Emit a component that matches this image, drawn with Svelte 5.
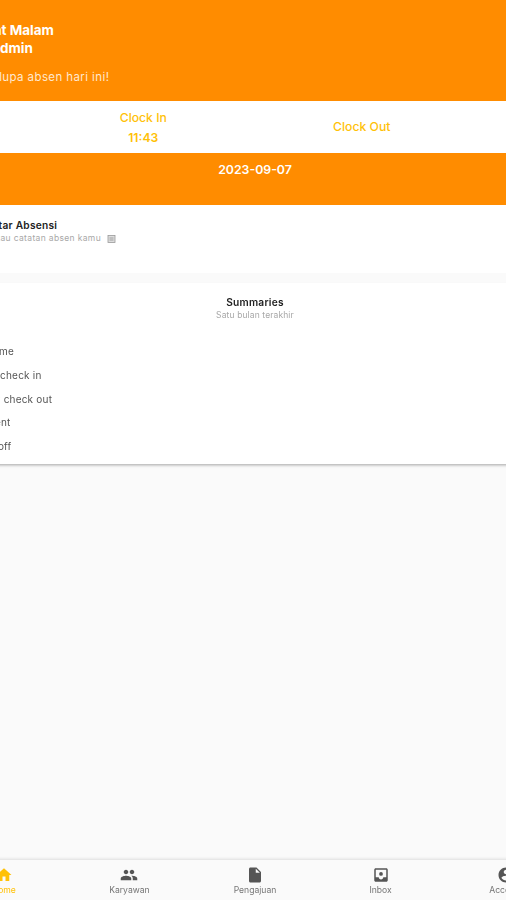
<script>
  const summaries = ['On time', 'Late check in', 'Early check out', 'Absent', 'Day off'];
  const tabs = [
    { label: 'Home', d: 'M10 20v-6h4v6h5v-8h3L12 3 2 12h3v8z', active: true },
    { label: 'Karyawan', d: 'M16 11c1.66 0 2.99-1.34 2.99-3S17.66 5 16 5s-3 1.34-3 3 1.34 3 3 3zm-8 0c1.66 0 2.99-1.34 2.99-3S9.66 5 8 5 5 6.34 5 8s1.34 3 3 3zm0 2c-2.33 0-7 1.17-7 3.5V19h14v-2.5C15 14.17 10.33 13 8 13zm8 0c-.29 0-.62.02-.97.05 1.16.84 1.97 1.97 1.97 3.45V19h6v-2.5c0-2.33-4.67-3.5-7-3.5z' },
    { label: 'Pengajuan', d: 'M6 2c-1.1 0-1.99.9-1.99 2L4 20c0 1.1.89 2 1.99 2H18c1.1 0 2-.9 2-2V8l-6-6H6zm7 7V3.5L18.5 9H13z' },
    { label: 'Inbox', d: 'M19 3H5c-1.1 0-2 .9-2 2v14c0 1.1.9 2 2 2h14c1.1 0 2-.9 2-2V5c0-1.1-.9-2-2-2zm0 12h-4c0 1.66-1.34 3-3 3s-3-1.34-3-3H5V5h14v10zM12 8a2.5 2.5 0 1 0 0 5 2.5 2.5 0 0 0 0-5z' },
    { label: 'Account', d: 'M12 2C6.48 2 2 6.48 2 12s4.48 10 10 10 10-4.48 10-10S17.52 2 12 2zm0 3c1.66 0 3 1.34 3 3s-1.34 3-3 3-3-1.34-3-3 1.34-3 3-3zm0 14.2c-2.5 0-4.71-1.28-6-3.22.03-1.99 4-3.08 6-3.08s5.97 1.09 6 3.08c-1.29 1.94-3.5 3.22-6 3.22z' }
  ];
</script>

<div class="page">
  <header class="hero">
    <div class="greeting">Selamat Malam</div>
    <div class="greeting">Halo, Admin</div>
    <p class="reminder">Jangan lupa absen hari ini!</p>
  </header>

  <section class="clock">
    <div class="clock-col">
      <span>Clock In</span>
      <span>11:43</span>
    </div>
    <div class="clock-col out">
      <span>Clock Out</span>
    </div>
  </section>

  <section class="date-band">2023-09-07</section>

  <section class="history">
    <h2>Daftar Absensi</h2>
    <p>
      Pantau catatan absen kamu
      <svg width="9" height="9" viewBox="0 0 9 9" aria-hidden="true">
        <rect x="1" y="1.5" width="7" height="7" fill="#ddd" stroke="#999" stroke-width="0.8" />
        <path d="M2.5 4h4M2.5 6h4" stroke="#888" stroke-width="0.7" />
      </svg>
    </p>
  </section>

  <section class="summary">
    <h2>Summaries</h2>
    <p>Satu bulan terakhir</p>
    <ul>
      {#each summaries as item}
        <li>{item}</li>
      {/each}
    </ul>
  </section>

  <div class="spacer"></div>

  <nav class="tabs">
    {#each tabs as tab}
      <div class="tab" class:active={tab.active}>
        <svg width="18" height="18" viewBox="0 0 24 24" aria-hidden="true"><path d={tab.d} fill-rule="evenodd" /></svg>
        <span>{tab.label}</span>
      </div>
    {/each}
  </nav>
</div>

<style>
  :global(body) {
    overflow: hidden;
    background: #fafafa;
  }
  .page {
    width: 628px;
    height: 900px;
    margin-left: -59px;
    display: flex;
    flex-direction: column;
    background: #fafafa;
    font-family: Inter, "Liberation Sans", sans-serif;
    filter: blur(0.6px);
  }
  .hero {
    height: 101px;
    box-sizing: border-box;
    padding: 21px 12px 0;
    background: #ff8c00;
    color: #fff;
  }
  .greeting {
    font-size: 13.5px;
    font-weight: 700;
    line-height: 18px;
  }
  .reminder {
    margin: 13px 0 0;
    font-size: 11.5px;
    letter-spacing: 0.4px;
    line-height: 14px;
    color: #ffe9cf;
  }
  .clock {
    height: 52px;
    padding-left: 93px;
    padding-right: 98px;
    display: grid;
    grid-template-columns: 1fr 1fr;
    background: #fff;
    color: #ffc107;
    font-size: 12.2px;
    font-weight: 500;
  }
  .clock-col {
    display: flex;
    flex-direction: column;
    align-items: center;
    justify-content: center;
    gap: 5px;
    line-height: 15px;
  }
  .clock-col.out {
    padding-bottom: 2px;
  }
  .clock-col span:nth-child(2) {
    font-weight: 600;
  }
  .date-band {
    height: 52px;
    box-sizing: border-box;
    padding-top: 9px;
    background: #ff8c00;
    color: #fff;
    text-align: center;
    font-size: 12.3px;
    font-weight: 600;
    line-height: 16px;
  }
  .history {
    height: 68px;
    box-sizing: border-box;
    padding: 14px 40px 0;
    background: #fff;
  }
  h2 {
    margin: 0;
    font-size: 10.2px;
    font-weight: 600;
    letter-spacing: 0.25px;
    line-height: 12px;
    color: #222;
  }
  .history p,
  .summary p {
    margin: 2px 0 0;
    font-size: 8.5px;
    letter-spacing: 0.12px;
    line-height: 11px;
    color: #a8a8a8;
  }
  .history p {
    letter-spacing: 0.35px;
  }
  .history svg {
    vertical-align: -1.5px;
    margin-left: 3px;
  }
  .summary {
    margin-top: 10px;
    height: 181px;
    box-sizing: border-box;
    padding-top: 13px;
    background: #fff;
    box-shadow: 0 2px 3px -1px rgba(0, 0, 0, 0.35);
    text-align: center;
  }
  ul {
    list-style: none;
    margin: 19px 0 0;
    padding: 0 35px;
    text-align: left;
  }
  li {
    height: 23.75px;
    font-size: 10px;
    letter-spacing: 0.2px;
    line-height: 23.75px;
    color: #555;
  }
  .spacer {
    flex: 1;
  }
  .tabs {
    height: 40px;
    display: grid;
    grid-template-columns: repeat(5, 1fr);
    background: #fafafa;
    box-shadow: 0 -1px 3px rgba(0, 0, 0, 0.12);
  }
  .tab {
    display: flex;
    flex-direction: column;
    align-items: center;
    padding-top: 6px;
    color: #757575;
    font-size: 8.6px;
    line-height: 12px;
  }
  .tab svg {
    fill: #555;
  }
  .tab.active {
    color: #ffc107;
  }
  .tab.active svg {
    fill: #ffc107;
  }
</style>
